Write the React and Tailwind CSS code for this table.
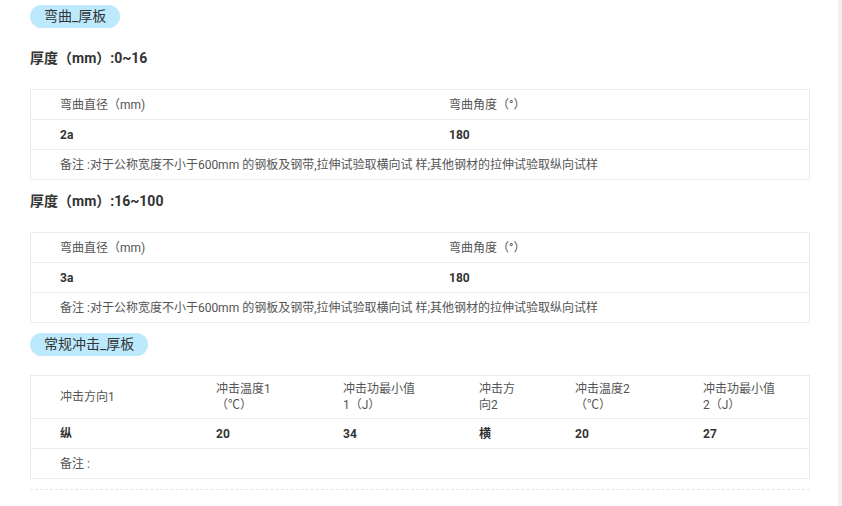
const font = { fontFamily: "Roboto, 'Noto Sans CJK SC', sans-serif" };

const Badge = ({ children, className = "" }) => (
  <div
    className={`flex w-fit items-center h-[23px] px-[14px] rounded-full bg-[#bde9fd] text-[14px] text-[#333] ${className}`}
  >
    {children}
  </div>
);

const BendTable = ({ diameter, angle, note }) => (
  <div className="w-[780px] border-t border-l border-r border-[#ebebeb] text-[12px]">
    <div className="grid grid-cols-2 h-[30px] border-b border-[#ebebeb] items-center text-[#555]">
      <div className="pl-[29px]">弯曲直径（mm)</div>
      <div className="pl-[29px]">弯曲角度（°）</div>
    </div>
    <div className="grid grid-cols-2 h-[30px] border-b border-[#ebebeb] items-center font-bold text-[#333]">
      <div className="pl-[29px]">{diameter}</div>
      <div className="pl-[29px]">{angle}</div>
    </div>
    <div className="h-[30px] border-b border-[#ebebeb] flex items-center pl-[29px] text-[#555]">
      备注 :{note}
    </div>
  </div>
);

const note =
  "对于公称宽度不小于600mm 的钢板及钢带,拉伸试验取横向试 样;其他钢材的拉伸试验取纵向试样";

const impactCols = "grid grid-cols-[156px_127px_136px_96px_128px_1fr]";

export default function App() {
  return (
    <div className="flex min-h-screen bg-white" style={font}>
      <div className="flex-1 pl-[30px] pt-[5px]">
        <Badge>弯曲_厚板</Badge>

        <div className="mt-[20px] h-[20px] flex items-center text-[14px] font-bold text-[#333]">
          厚度（mm）:0~16
        </div>
        <div className="mt-[21px]">
          <BendTable diameter="2a" angle="180" note={note} />
        </div>

        <div className="mt-[11px] h-[20px] flex items-center text-[14px] font-bold text-[#333]">
          厚度（mm）:16~100
        </div>
        <div className="mt-[21px]">
          <BendTable diameter="3a" angle="180" note={note} />
        </div>

        <Badge className="mt-[10px]">常规冲击_厚板</Badge>

        <div className="mt-[19px] w-[780px] border-t border-l border-r border-[#ebebeb] text-[12px]">
          <div className={`${impactCols} h-[43px] border-b border-[#ebebeb] items-center text-[#555] leading-[16px] whitespace-nowrap`}>
            <div className="pl-[29px]">冲击方向1</div>
            <div className="pl-[29px]">
              冲击温度1
              <br />
              （℃）
            </div>
            <div className="pl-[29px]">
              冲击功最小值
              <br />
              1（J）
            </div>
            <div className="pl-[29px]">
              冲击方
              <br />
              向2
            </div>
            <div className="pl-[29px]">
              冲击温度2
              <br />
              （℃）
            </div>
            <div className="pl-[29px]">
              冲击功最小值
              <br />
              2（J）
            </div>
          </div>
          <div className={`${impactCols} h-[30px] border-b border-[#ebebeb] items-center font-bold text-[#333]`}>
            <div className="pl-[29px]">纵</div>
            <div className="pl-[29px]">20</div>
            <div className="pl-[29px]">34</div>
            <div className="pl-[29px]">横</div>
            <div className="pl-[29px]">20</div>
            <div className="pl-[29px]">27</div>
          </div>
          <div className="h-[30px] border-b border-[#ebebeb] flex items-center pl-[29px] text-[#555]">
            备注 :
          </div>
        </div>

        <div className="mt-[10px] w-[780px] border-t border-dashed border-[#e6e6e6]" />
      </div>
      <div className="w-[4px] bg-[#f0f0f0]" />
    </div>
  );
}
